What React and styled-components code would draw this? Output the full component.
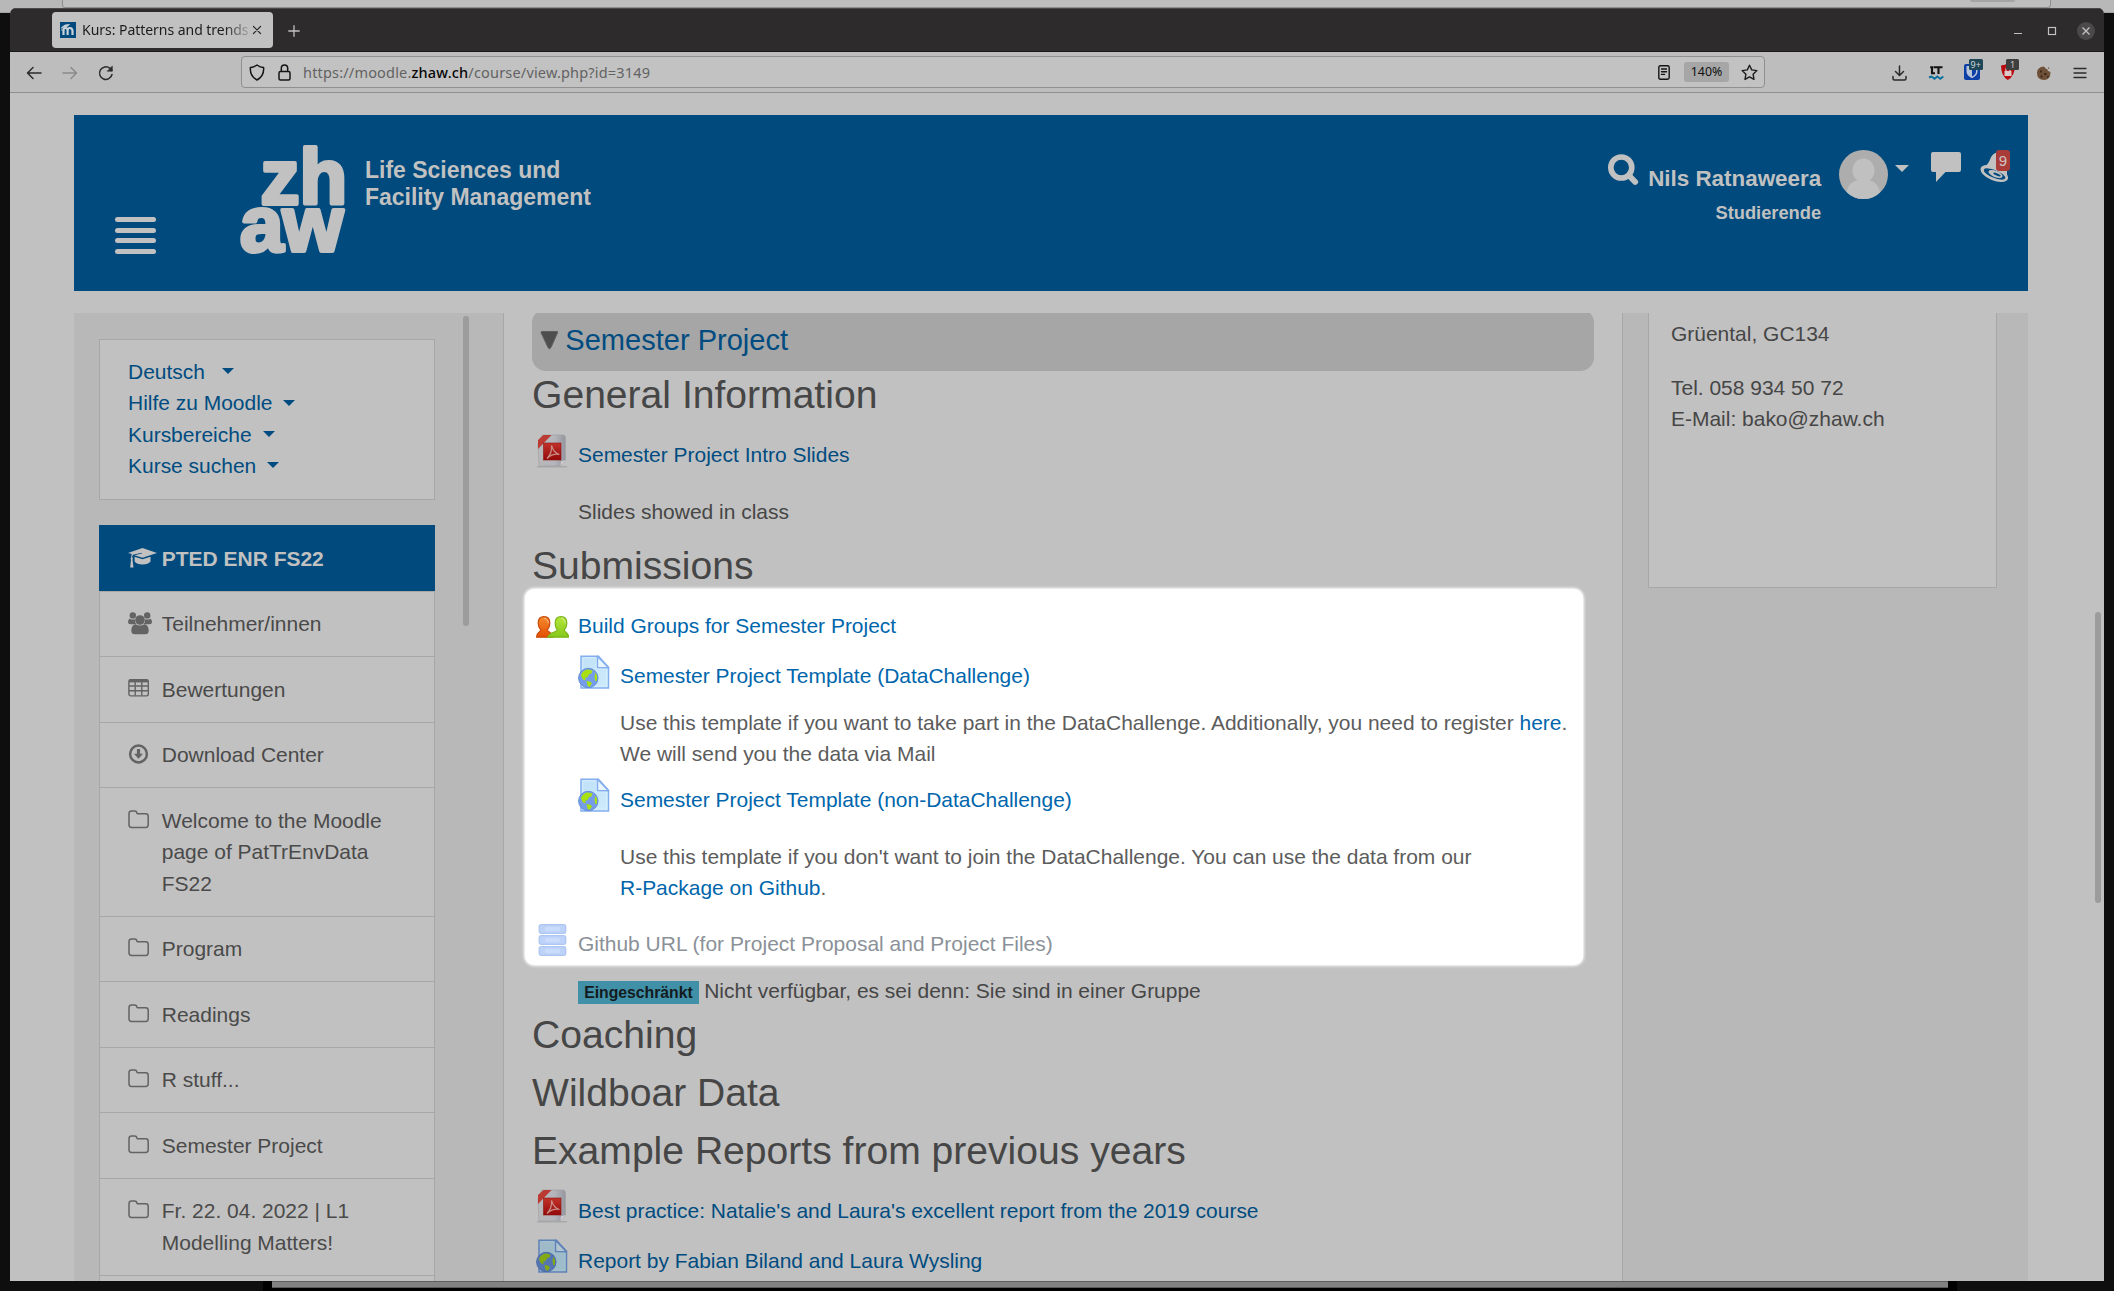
import React from "react";
import styled, { createGlobalStyle } from "styled-components";

const c = {
  page: "#c1c1c1",
  panel: "#b8b8b8",
  line: "#a7a7a7",
  brand: "#004a7d",
  link: "#004c80",
  linkLit: "#0066ac",
  text: "#464646",
  textLit: "#5c5c5c",
};
const sans = `"Liberation Sans", Arial, sans-serif`;
const ui = `"Noto Sans", "Open Sans", sans-serif`;
const body = "20.97px";

const Global = createGlobalStyle`
  * { box-sizing: border-box; }
  body { margin: 0; background: #0e0e0e; overflow: hidden; }
  p, h3 { margin: 0; font-weight: 400; }
  svg { display: block; flex: none; }
`;

/* ---------- desktop and window ---------- */
const Desktop = styled.div`
  width: 2114px;
  height: 1291px;
  overflow: hidden;
  font-family: ${sans};
  background: linear-gradient(#a4a4a4, #a4a4a4) 0 12px / 100% 1px no-repeat,
    linear-gradient(#b8b8b8, #b8b8b8) 0 0 / 100% 12px no-repeat, #0e0e0e;
`;
const BackTabStrip = styled.div`
  height: 8px;
  padding-left: 62px;
`;
const BackTab = styled.div`
  width: 1989px;
  height: 8px;
  background: #bebebe;
  border: 1px solid #8e8e8e;
  border-top: 0;
  border-radius: 0 0 3px 3px;
  padding-left: 1907px;
`;
const BackPill = styled.div`
  width: 45px;
  height: 2px;
  background: #a4a4a4;
  border-radius: 0 0 2px 2px;
`;
const Window = styled.div`
  width: 2094px;
  height: 1273px;
  margin-left: 10px;
  border-radius: 6px 6px 0 0;
  overflow: hidden;
  background: ${c.page};
`;
const BackBottom = styled.div`
  width: 1694px;
  height: 10px;
  margin-left: 263px;
  padding: 0 9px;
  background: #000;
`;
const BackBottomBar = styled.div`
  height: 7px;
  background: linear-gradient(#5e5e5e 0 1px, #828282 1px 6px, #5a5a5a 6px);
`;

/* ---------- browser chrome ---------- */
const TitleBar = styled.div`
  height: 44px;
  display: flex;
  padding: 3px 6px 0 42px;
  background: #2e2b2c;
  border-top: 1px solid #4a4848;
  border-bottom: 1px solid #1b1a1a;
`;
const Tab = styled.div`
  width: 221px;
  height: 36px;
  display: flex;
  align-items: center;
  padding: 0 10px 0 8px;
  background: #c1c1c1;
  border-radius: 4px;
`;
const TabTitle = styled.div`
  width: 168px;
  margin: 0 2px 0 6px;
  flex: none;
  overflow: hidden;
  white-space: nowrap;
  font: 14px/20px ${ui};
  letter-spacing: -0.04px;
  color: #1c1c1c;
  mask-image: linear-gradient(90deg, #000 142px, transparent 172px);
`;
const NewTab = styled.div`
  margin: 13px 0 0 15px;
`;
const Controls = styled.div`
  display: flex;
  gap: 10px;
  margin: 7px 0 0 auto;
`;
const Control = styled.div`
  width: 24px;
  height: 24px;
  display: grid;
  place-items: center;
`;
const Toolbar = styled.div`
  height: 41px;
  display: flex;
  align-items: flex-start;
  padding: 4px 6px 0;
  background: #bdbdbd;
  border-bottom: 1px solid #8f8f8f;
`;
const ToolIcon = styled.div`
  width: 36px;
  height: 34px;
  display: grid;
  place-items: center;
  flex: none;
`;
const UrlBar = styled.div`
  width: 1524px;
  height: 32px;
  margin: 0 117px 0 117px;
  display: flex;
  align-items: center;
  padding: 0 6px 0 7px;
  background: #c2c2c2;
  border: 1px solid #8f8f8f;
  border-radius: 4px;
`;
const Url = styled.div`
  flex: 1;
  margin-left: 12px;
  padding-bottom: 1px;
  font: 14.5px/20px ${ui};
  letter-spacing: 0.18px;
  color: #626262;
  b { font-weight: 500; color: #060606; }
`;
const Zoom = styled.div`
  width: 45px;
  height: 20px;
  margin: 0 12px 0 14px;
  border-radius: 3px;
  background: #a6a6a6;
  color: #111;
  font: 12.4px/20px ${ui};
  text-align: center;
`;

/* ---------- site header ---------- */
const Page = styled.div`
  height: 1188px;
  display: flex;
  padding: 22px 0 0 64px;
`;
const Site = styled.div`
  width: 1954px;
  height: 1166px;
  overflow: hidden;
`;
const ScrollThumb = styled.div`
  width: 6px;
  height: ${(p) => p.$h}px;
  margin: ${(p) => p.$top}px 0 0 ${(p) => p.$left}px;
  border-radius: 3px;
  background: #9c9c9c;
  flex: none;
`;
const Header = styled.header`
  height: 176px;
  display: flex;
  align-items: flex-start;
  padding: 0 18px 0 41px;
  background: ${c.brand};
  color: ${c.page};
`;
const Burger = styled.div`
  width: 41px;
  margin-top: 102px;
  display: grid;
  gap: 5.3px;
  i { height: 5.3px; border-radius: 3px; background: ${c.page}; }
`;
const Logo = styled.svg`
  margin: 25px 0 0 80px;
  overflow: visible;
  text { font: 700 78px ${sans}; fill: ${c.page}; stroke: ${c.page}; stroke-width: 4px; stroke-linejoin: round; }
`;
const Tagline = styled.div`
  margin: 42.4px auto 0 17px;
  font-size: 23px;
  line-height: 26.5px;
  font-weight: 700;
  letter-spacing: -0.02px;
  white-space: nowrap;
`;
const UserBlock = styled.div`
  margin: 49.5px 18.2px 0 8.7px;
  text-align: right;
  font-weight: 700;
  line-height: 28px;
  white-space: nowrap;
`;
const UserName = styled.div`
  font-size: 22.4px;
`;
const UserRole = styled.div`
  margin-top: 6px;
  font-size: 18.3px;
`;
const Avatar = styled.div`
  width: 49px;
  height: 49px;
  margin-top: 35px;
  border-radius: 50%;
  overflow: hidden;
  background: #adadad;
`;
const Caret = styled.span`
  display: inline-block;
  border: ${(p) => p.$s}px solid transparent;
  border-top-color: currentColor;
  border-bottom: 0;
  margin: ${(p) => p.$m};
`;
const At = styled.div`
  margin: ${(p) => p.$m};
`;
const Bell = styled.div`
  width: 30px;
  height: 33px;
  margin: 35px 0 0 19px;
  position: relative;
`;
const BellCount = styled.span`
  position: absolute;
  left: 16px;
  top: 0;
  width: 14px;
  height: 21px;
  border-radius: 3px;
  background: #a93b39;
  color: #d0c4c4;
  font: 15px/22px ${sans};
  text-align: center;
`;

/* ---------- columns ---------- */
const Columns = styled.div`
  height: 968px;
  margin-top: 22px;
  display: grid;
  grid-template-columns: 430px 1118px 406px;
`;
const Sidebar = styled.aside`
  height: 968px;
  overflow: hidden;
  display: flex;
  padding-left: 25px;
  background: ${c.panel};
  border-right: 1px solid ${c.line};
`;
const SideInner = styled.div`
  width: 336px;
  padding-top: 26px;
  flex: none;
`;
const MenuCard = styled.nav`
  height: 161px;
  padding: 15.9px 0 0 28px;
  background: ${c.page};
  border: 1px solid ${c.line};
  color: ${c.link};
  font-size: ${body};
  line-height: 31.4px;
`;
const MenuLink = styled.div`
  display: flex;
  align-items: flex-start;
  height: 31.4px;
`;
const NavList = styled.nav`
  margin-top: 25px;
  height: 800px;
  background: ${c.page};
  border: solid ${c.line};
  border-width: 0 1px;
`;
const NavItem = styled.div`
  display: flex;
  align-items: flex-start;
  padding: 16.5px 22px 16.5px ${(p) => (p.$active ? 29.3 : 28.3)}px;
  margin: ${(p) => (p.$active ? "0 -1px" : "0")};
  border-top: 1px solid ${(p) => (p.$active ? c.brand : c.line)};
  background: ${(p) => (p.$active ? c.brand : "transparent")};
  color: ${(p) => (p.$active ? c.page : "#4a4a4a")};
  font-weight: ${(p) => (p.$active ? 700 : 400)};
  font-size: ${body};
  line-height: 31.5px;
`;
const NavIcon = styled.span`
  width: 33.5px;
  flex: none;
  padding-top: 4px;
  color: ${(p) => (p.$active ? c.page : "#636363")};
  svg { overflow: visible; }
`;
const Main = styled.main`
  height: 968px;
  overflow: hidden;
  padding: 0 28px;
  color: ${c.text};
`;
const SectionBar = styled.div`
  height: 62px;
  margin-top: -4px;
  display: flex;
  align-items: center;
  padding: 0 0 0 8px;
  border-radius: 14px;
  background: #a6a6a6;
  color: ${c.link};
  font-size: 29.05px;
`;
const SectionTitle = styled.div`
  margin-left: 6.3px;
  line-height: 34px;
`;
const Heading = styled.h3`
  margin-top: ${(p) => p.$gap}px;
  font-size: 39.1px;
  line-height: 46px;
  height: 44px;
  white-space: nowrap;
`;
const Item = styled.div`
  display: flex;
  align-items: flex-start;
  height: 31px;
  margin-top: ${(p) => p.$gap}px;
  padding-left: ${(p) => (p.$nested ? 46 : 4)}px;
  font-size: ${body};
  line-height: 31px;
  white-space: nowrap;
  color: ${(p) => (p.$tone === "lit" ? c.linkLit : p.$tone === "muted" ? "#8b9198" : c.link)};
`;
const IconSlot = styled.span`
  width: 42px;
  height: 34px;
  margin-top: ${(p) => p.$shift}px;
  flex: none;
`;
const Desc = styled.p`
  margin-top: ${(p) => p.$gap}px;
  padding-left: ${(p) => (p.$nested ? 88 : 46)}px;
  font-size: ${body};
  line-height: 31px;
  white-space: nowrap;
  color: ${(p) => (p.$nested ? c.textLit : c.text)};
  a { color: ${c.linkLit}; }
`;
const Spotlight = styled.section`
  width: 1058px;
  height: 376px;
  margin: 2px 0 0 -7px;
  padding: 1px 0 0 7px;
  border-radius: 9px;
  background: #fff;
  box-shadow: 0 0 3px 1px #fff;
`;
const Restriction = styled.div`
  display: flex;
  height: 31px;
  margin-top: 10px;
  padding-left: 46px;
  font-size: ${body};
  line-height: 31px;
  white-space: nowrap;
`;
const Badge = styled.span`
  height: 23px;
  margin: 6px 5.3px 0 0;
  padding: 0 6.2px;
  background: #4090a8;
  color: #131b1e;
  font-size: 15.75px;
  line-height: 23px;
  font-weight: 700;
`;
const RightCol = styled.aside`
  padding-left: 25px;
  background: ${c.panel};
  border-left: 1px solid ${c.line};
`;
const ContactCard = styled.div`
  width: 349px;
  height: 275px;
  padding: 5px 0 0 22px;
  background: ${c.page};
  border: 1px solid ${c.line};
  border-top: 0;
  color: ${c.text};
  font-size: ${body};
  line-height: 31px;
  p + p { margin-top: 23px; }
`;

/* ---------- drawings ---------- */
const Svg = ({ w, h, children, ...p }) => (
  <svg width={w} height={h} viewBox={`0 0 ${w} ${h}`} fill="none" {...p}>{children}</svg>
);
const Line = (p) => <path fill="none" stroke="#2b2b2b" strokeWidth="1.5" strokeLinecap="round" strokeLinejoin="round" {...p} />;

const PdfIcon = () => (
  <Svg w={33} h={34}>
    <defs>
      <linearGradient id="pdfPaper" x1="0" x2="1"><stop stopColor="#b9b9bb" /><stop offset=".6" stopColor="#b4b4bb" /><stop offset="1" stopColor="#96969f" /></linearGradient>
      <linearGradient id="pdfRed" x1="0" y1="0" x2="0" y2="1"><stop stopColor="#c23229" /><stop offset="1" stopColor="#93090a" /></linearGradient>
    </defs>
    <path d="M1 32h30v1.500H1z" fill="#999" opacity=".6" />
    <path d="M6 1h22l1.500 2v23l-5 6H3L2 10z" fill="url(#pdfPaper)" stroke="#a2a2a6" strokeWidth=".7" />
    <path d="M29.500 26l-5 6 .5-4.500z" fill="#d0d0d4" />
    <path d="M7.500 1h8L2 15V6z" fill="#bb3a32" />
    <rect x="7.500" y="9" width="17.500" height="17" fill="url(#pdfRed)" stroke="#8d1513" strokeWidth=".6" />
    <path d="M15.500 11.500c1.500 5 3.500 8 8 9-4-1-8 0-12.500 4 3-3 5-8 4.500-13z" stroke="#c98f88" strokeWidth="1.200" />
  </Svg>
);
const WebIcon = ({ dim }) => {
  const id = dim ? "webDim" : "webLit";
  return (
    <Svg w={33} h={34}>
      <defs>
        <linearGradient id={id} x1="0" y1="0" x2="1" y2="1"><stop stopColor={dim ? "#9fb8c7" : "#bfe0f8"} /><stop offset="1" stopColor={dim ? "#9dbdcb" : "#cdebfb"} /></linearGradient>
      </defs>
      <path d="M3 1.200h17.500l10 11V33H3z" fill={`url(#${id})`} stroke={dim ? "#5f82b8" : "#84aef0"} strokeWidth="1.500" />
      <path d="M4.800 2.900h13.500v11h10.500v17.300h-24z" stroke={dim ? "#a9c3d0" : "#ddf1fd"} strokeWidth=".8" />
      <path d="M19.500 1.200V12.500l11 .3z" fill={dim ? "#b3c5cf" : "#e9f6fe"} stroke={dim ? "#5f82b8" : "#84aef0"} strokeWidth="1.500" strokeLinejoin="round" />
      <circle cx="10.300" cy="23" r="9.700" fill={dim ? "#5575b2" : "#759de8"} stroke={dim ? "#4a69a8" : "#638bd8"} strokeWidth="1" />
      <path d="M3 20.500c.8-3.500 4-6 7-6l4.500 1-1 3-2.500.7-1.500 3-2.500.5 1 2.500-3-.7zM8.500 26l4 .7 1.500 1.800-2.500 3.500-2-1.500zM17.500 17.500l1.500 3v5l-1.700.8-.8-4.500z" fill={dim ? "#83aa12" : "#a9e010"} />
    </Svg>
  );
};
const GroupIcon = () => (
  <Svg w={33} h={34}>
    <defs>
      <linearGradient id="gOrange" x1="0" y1="0" x2="0" y2="1"><stop stopColor="#f58a2c" /><stop offset="1" stopColor="#e44f04" /></linearGradient>
      <linearGradient id="gGreen" x1="0" y1="0" x2="0" y2="1"><stop stopColor="#b6e63a" /><stop offset="1" stopColor="#86c81c" /></linearGradient>
    </defs>
    <path d="M8 .7c4 0 5.800 2.800 5.800 6.500 0 3-1 5.200-2.600 6.800.2 2 5.300 2 5.300 7.200H.6c0-5 4-5.200 4.300-7.200C3.300 12.300 2.200 10 2.200 7.200 2.200 3.500 4 .7 8 .7z" fill="url(#gOrange)" stroke="#c94a08" strokeWidth="1.200" />
    <path d="M25 .7c4 0 5.800 2.800 5.800 6.500 0 3-1 5.200-2.600 6.800.2 2 4.300 2.200 4.300 7.200H11.800c1-5 9.500-5.200 9.500-7.200-1.600-1.700-2.100-4-2.100-6.800C19.200 3.500 21 .7 25 .7z" fill="url(#gGreen)" stroke="#7ab51a" strokeWidth="1.200" />
    <path d="M25 2.300c3 0 4.200 2.200 4.200 5M8 2.300c3 0 4.200 2.200 4.200 5" stroke="#fff" opacity=".45" />
  </Svg>
);
const DbIcon = () => (
  <Svg w={33} h={34}>
    {[0.7, 11.7, 22.7].map((y) => (
      <g key={y}>
        <rect x="3.200" y={y} width="26.500" height="8.600" rx="2" fill="#bcd2f8" stroke="#aec6f2" strokeWidth="1.300" />
        <rect x="9" y={y + 2} width="15" height="4.600" rx="2" fill="#c9dcfb" />
      </g>
    ))}
  </Svg>
);
const FolderIcon = () => (
  <Svg w={21} h={23}>
    <path d="M1 4.500Q1 1.900 3.500 1.900h3.200Q8.800 1.900 8.900 4.200q.1.600 1 .6h7.800Q20.200 4.800 20.200 7.400v8.400q0 2.600-2.500 2.600H3.500Q1 18.400 1 15.800z" stroke="currentColor" strokeWidth="1.500" />
  </Svg>
);
const CapIcon = () => (
  <Svg w={29} h={22}>
    <path fill="currentColor" d="M14.500 1L29 6 14.500 10.700 6.500 8.200 13.800 6.600v-.8L5 7.700q-.8.700-.8 2.800 1.300 1 .3 2.200L5.500 20.600H2.200L3 12.700q-1-1.200.2-2.200 0-2 .6-3.400L0 6z" />
    <path fill="currentColor" d="M6.600 9.800l7.900 2.500 8-2.500v4.800q-2.200 3-8 3t-7.900-3z" />
  </Svg>
);
const PeopleIcon = () => (
  <Svg w={24} h={23}>
    <g fill="currentColor">
      <circle cx="4.800" cy="3.400" r="3.200" /><circle cx="19.200" cy="3.400" r="3.200" />
      <path d="M1.500 6.700q3.200 1.400 5.500.5-.5 3 1.300 5H2.500Q0 12.200 0 10q0-2.400 1.500-3.300zM22.500 6.700q-3.200 1.400-5.500.5.500 3-1.300 5h5.800Q24 12.200 24 10q0-2.400-1.500-3.300z" />
      <circle cx="12" cy="8" r="4.800" />
      <path d="M7.500 12.200q4.500 2.800 9 0 4.200.8 4.200 6.500 0 3.600-3.600 3.600H6.900q-3.600 0-3.600-3.600 0-5.700 4.200-6.500z" />
    </g>
  </Svg>
);
const TableIcon = () => (
  <Svg w={21} h={20}>
    <rect x=".9" y="1.700" width="19.400" height="16.200" rx="1.800" stroke="currentColor" strokeWidth="1.400" />
    <path d="M1 8h19M1 12.700h19M7.200 3v14.500M13.800 3v14.500" stroke="currentColor" strokeWidth="1.400" />
    <path d="M1 3h19" stroke="currentColor" strokeWidth="2.800" />
  </Svg>
);
const DownIcon = () => (
  <Svg w={21} h={22}>
    <circle cx="10.500" cy="11" r="8.400" stroke="currentColor" strokeWidth="2.500" />
    <path d="M8.900 6h3.200v4.800H15L10.500 15.700 6 10.800h2.900z" fill="currentColor" />
  </Svg>
);

const navItems = [
  [PeopleIcon, "Teilnehmer/innen"],
  [TableIcon, "Bewertungen"],
  [DownIcon, "Download Center"],
  [FolderIcon, "Welcome to the Moodle page of PatTrEnvData FS22"],
  [FolderIcon, "Program"],
  [FolderIcon, "Readings"],
  [FolderIcon, "R stuff..."],
  [FolderIcon, "Semester Project"],
  [FolderIcon, "Fr. 22. 04. 2022 | L1 Modelling Matters!"],
];
const menu = [
  ["Deutsch", "12.4px 0 0 17px"],
  ["Hilfe zu Moodle", "12.4px 0 0 10.5px"],
  ["Kursbereiche", "12.4px 0 0 11px"],
  ["Kurse suchen", "12.4px 0 0 11px"],
];

function Chrome() {
  return (
    <>
      <TitleBar>
        <Tab>
          <Svg w={16} h={16}>
            <rect width="16" height="16" fill="#004a7d" />
            <path d="M3.500 13V8.500Q3.500 6 5.500 6T7.600 8.500V13M7.600 8.500Q7.600 6 9.800 6T12.500 8.500V13" stroke="#c8d2da" strokeWidth="2.200" />
            <path d="M1.500 5.500L5 3l4.500-.5L6.500 5zM2 5.500V9" stroke="#c8d2da" fill="#c8d2da" strokeWidth=".8" />
          </Svg>
          <TabTitle>Kurs: Patterns and trends</TabTitle>
          <Svg w={10} h={10}><Line d="M1.500 1.500l7 7M8.500 1.500l-7 7" strokeWidth="1.200" /></Svg>
        </Tab>
        <NewTab><Svg w={12} h={12}><path d="M6 .3v11.400M.3 6h11.400" stroke="#c1c1c1" strokeWidth="1.300" /></Svg></NewTab>
        <Controls>
          <Control><Svg w={12} h={10}><path d="M2 7.500h8" stroke="#c1c1c1" strokeWidth="1.200" /></Svg></Control>
          <Control><Svg w={10} h={10}><rect x="1.500" y="1.500" width="7" height="7" stroke="#c1c1c1" strokeWidth="1.200" /></Svg></Control>
          <Control>
            <Svg w={18} h={18}><circle cx="9" cy="9" r="9" fill="#4b4949" /><path d="M5.500 5.500l7 7M12.500 5.500l-7 7" stroke="#c1c1c1" strokeWidth="1.400" /></Svg>
          </Control>
        </Controls>
      </TitleBar>
      <Toolbar>
        <ToolIcon><Svg w={16} h={14}><Line d="M15 7H1.500M7 1.500L1.500 7 7 12.500" /></Svg></ToolIcon>
        <ToolIcon><Svg w={16} h={14}><Line stroke="#8a8a8a" d="M1 7h13.500M9 1.500L14.500 7 9 12.500" /></Svg></ToolIcon>
        <ToolIcon><Svg w={16} h={16}><Line d="M14 9.500A6.300 6.300 0 1 1 11.800 3.200L14 5" /><Line d="M14.300 1.300v4.900H9.500z" fill="#2b2b2b" strokeWidth=".6" /></Svg></ToolIcon>
        <UrlBar>
          <Svg w={16} h={17}><Line stroke="#151515" d="M8 1q3 2.300 6.600 2.500Q15.300 12 8 16 .7 12 1.400 3.500 5 3.300 8 1z" /></Svg>
          <At $m="0 0 0 13px"><Svg w={13} h={17}><Line stroke="#151515" d="M2.500 7.500h8q1.500 0 1.500 1.500v5.500q0 1.500-1.500 1.500h-8Q1 16 1 14.500V9q0-1.500 1.500-1.500zM3.300 7.500V4.300Q3.300 1 6.500 1t3.200 3.300v3.200" /></Svg></At>
          <Url>https://moodle.<b>zhaw.ch</b>/course/view.php?id=3149</Url>
          <Svg w={12} h={15}><Line stroke="#151515" d="M2.500.8h7q1.700 0 1.700 1.700v10q0 1.700-1.700 1.700h-7Q.8 14.200.8 12.500v-10Q.8.8 2.500.8zM3.500 4h5M3.500 6.700h5M3.500 9.400h3" strokeWidth="1.400" /></Svg>
          <Zoom>140%</Zoom>
          <Svg w={17} h={17}><Line stroke="#1c1c1c" strokeWidth="1.400" d="M8.500 1.200l2.200 4.700 5.200.7-3.800 3.600.9 5.200-4.500-2.500L4 15.400l.9-5.200L1.100 6.600l5.200-.7z" /></Svg>
        </UrlBar>
        <ToolIcon><Svg w={16} h={16}><Line d="M7.500 1v9.300M3.500 6.500l4 4 4-4M1 11.500v2q0 1.500 1.500 1.500h10q1.500 0 1.500-1.500v-2" /></Svg></ToolIcon>
        <ToolIcon>
          <Svg w={17} h={16}>
            <path d="M2.200 2.200H4V8.200H7M5.500 2.200H14.500M10.500 2.200V9" stroke="#111" strokeWidth="2.100" />
            <path d="M1 12.500l2.500-1 3 2.300 2.800-2.300 3 2.300 3-2.300" stroke="#0a6f9c" strokeWidth="1.900" />
          </Svg>
        </ToolIcon>
        <ToolIcon>
          <Svg w={22} h={32}>
            <rect x="3" y="7" width="16" height="16" rx="2" fill="#0c40a6" />
            <path d="M5.500 9h11v5.500q0 4-5.500 6.700-5.500-2.700-5.500-6.700z" fill="#b8c4d8" /><path d="M11 10.500h4v4q0 3-4 5z" fill="#0c40a6" />
            <rect x="8" y="2" width="14" height="11" rx="1.500" fill="#1f4657" />
            <text x="9.500" y="10.700" fontSize="9" fontFamily="Noto Sans" fill="#ccd6da">9+</text>
          </Svg>
        </ToolIcon>
        <ToolIcon>
          <Svg w={22} h={32}>
            <path d="M4 8.500Q8 8 10.800 6.500 14 8 18 8.500 18 19 10.800 23 4 19 4 8.500z" fill="#b80a0f" />
            <rect x="7.500" y="14" width="7" height="5" fill="#ddc6c6" /><path d="M9 14v-2q0-1.500 2-1.500t2 1.500v2" stroke="#ddc6c6" strokeWidth="1.300" />
            <rect x="9" y="2" width="13" height="11" rx="1.500" fill="#3e3e3e" />
            <text x="13" y="10.700" fontSize="9" fontFamily="Noto Sans" fill="#cfcfcf">1</text>
          </Svg>
        </ToolIcon>
        <ToolIcon>
          <Svg w={16} h={16}>
            <path d="M8 1.500q1.500 2.500 3 2.500.5 2.500 3.500 3Q14.500 15 8 15 1 15 1 8q0-6 7-6.500z" fill="#6e5138" />
            <path d="M4 5.500h2v2H4zM8 8h2.500v2H8zM4.500 10.500h2v2h-2zM11 11h1.500v1.500H11z" fill="#3a2a1c" /><path d="M12 2.500h1.200v1.200H12z" fill="#6e5138" />
          </Svg>
        </ToolIcon>
        <ToolIcon><Svg w={14} h={12}><Line strokeWidth="1.300" d="M1 1.500h12M1 6h12M1 10.500h12" /></Svg></ToolIcon>
      </Toolbar>
    </>
  );
}

function SiteHeader() {
  return (
    <Header>
      <Burger><i /><i /><i /><i /></Burger>
      <Logo width="112" height="120" viewBox="236 140 112 120">
        <text x="260.500 299.500" y="203.500">zh</text>
        <text x="240 282.500" y="251">aw</text>
      </Logo>
      <Tagline>Life Sciences und<br />Facility Management</Tagline>
      <At $m="39px 0 0 0">
        <Svg w={31} h={32}>
          <circle cx="13.300" cy="13.500" r="10.500" stroke={c.page} strokeWidth="5.600" />
          <path d="M21 21.500l6.200 6.500" stroke={c.page} strokeWidth="5.800" strokeLinecap="round" />
        </Svg>
      </At>
      <UserBlock>
        <UserName>Nils Ratnaweera</UserName>
        <UserRole>Studierende</UserRole>
      </UserBlock>
      <Avatar>
        <Svg w={49} h={49}>
          <ellipse cx="24.500" cy="20.500" rx="11" ry="12" fill="#c0c0c0" />
          <path d="M7 49q0-17 12-18.500h11Q41 32 42 49z" fill="#c0c0c0" />
        </Svg>
      </Avatar>
      <Caret $s={7.8} $m="50px 21.9px 0 6.8px" />
      <At $m="37px 0 0 0">
        <Svg w={30} h={31}><path d="M2 0h26q2 0 2 2v16q0 2-2 2H14.500L5 30V20H2q-2 0-2-2V2q0-2 2-2z" fill={c.page} /></Svg>
      </At>
      <Bell>
        <Svg w={30} h={33}>
          <path d="M17 2.500q-5 1-7 7T2 17.500L27 25V3z" fill={c.page} />
          <ellipse cx="14.300" cy="23.500" rx="14.600" ry="7" transform="rotate(22 14.300 23.500)" fill={c.page} />
          <ellipse cx="14.500" cy="24" rx="11.500" ry="3.900" transform="rotate(22 14.500 24)" fill={c.brand} />
          <ellipse cx="15.500" cy="24" rx="7.500" ry="3.200" transform="rotate(22 15.500 24)" fill={c.page} />
          <ellipse cx="17" cy="24.500" rx="4" ry="1.100" transform="rotate(22 17 24.500)" fill={c.brand} />
        </Svg>
        <BellCount>9</BellCount>
      </Bell>
    </Header>
  );
}

const Activity = ({ icon, shift = -6, children, ...p }) => (
  <Item {...p}>
    <IconSlot $shift={shift}>{icon}</IconSlot>
    <span>{children}</span>
  </Item>
);

export default function App() {
  return (
    <Desktop>
      <Global />
      <BackTabStrip><BackTab><BackPill /></BackTab></BackTabStrip>
      <Window>
        <Chrome />
        <Page>
          <Site>
            <SiteHeader />
            <Columns>
              <Sidebar>
                <SideInner>
                  <MenuCard>
                    {menu.map(([label, m]) => (
                      <MenuLink key={label}>{label}<Caret $s={6} $m={m} /></MenuLink>
                    ))}
                  </MenuCard>
                  <NavList>
                    <NavItem $active><NavIcon $active><CapIcon /></NavIcon>PTED ENR FS22</NavItem>
                    {navItems.map(([Icon, label]) => (
                      <NavItem key={label}><NavIcon><Icon /></NavIcon><span>{label}</span></NavItem>
                    ))}
                    <NavItem />
                  </NavList>
                </SideInner>
                <ScrollThumb $h={310} $top={3} $left={28} />
              </Sidebar>
              <Main>
                <SectionBar>
                  <Svg w={19} h={20}><path d="M1.500 1.500h15.500q1 0 .6 1L11 17.500q-1.500 2.500-3 0L1 2.500z" fill="#4e4e4e" stroke="#5e5e5e" /></Svg>
                  <SectionTitle>Semester Project</SectionTitle>
                </SectionBar>
                <Heading $gap={1}>General Information</Heading>
                <Activity $gap={23} shift={-5} icon={<PdfIcon />}>Semester Project Intro Slides</Activity>
                <Desc $gap={26}>Slides showed in class</Desc>
                <Heading $gap={16}>Submissions</Heading>
                <Spotlight>
                  <Activity $gap={20} shift={6} $tone="lit" icon={<GroupIcon />}>Build Groups for Semester Project</Activity>
                  <Activity $gap={19} shift={-5} $nested $tone="lit" icon={<WebIcon />}>Semester Project Template (DataChallenge)</Activity>
                  <Desc $gap={16} $nested>
                    Use this template if you want to take part in the DataChallenge. Additionally, you need to register <a>here</a>.<br />
                    We will send you the data via Mail
                  </Desc>
                  <Activity $gap={15} $nested $tone="lit" icon={<WebIcon />}>Semester Project Template (non-DataChallenge)</Activity>
                  <Desc $gap={26} $nested>
                    Use this template if you don't want to join the DataChallenge. You can use the data from our<br />
                    <a>R-Package on Github</a>.
                  </Desc>
                  <Activity $gap={25} shift={-4} $tone="muted" icon={<DbIcon />}>Github URL (for Project Proposal and Project Files)</Activity>
                </Spotlight>
                <Restriction><Badge>Eingeschränkt</Badge>Nicht verfügbar, es sei denn: Sie sind in einer Gruppe</Restriction>
                <Heading $gap={6}>Coaching</Heading>
                <Heading $gap={14}>Wildboar Data</Heading>
                <Heading $gap={14}>Example Reports from previous years</Heading>
                <Activity $gap={23} icon={<PdfIcon />}>Best practice: Natalie's and Laura's excellent report from the 2019 course</Activity>
                <Activity $gap={19} icon={<WebIcon dim />}>Report by Fabian Biland and Laura Wysling</Activity>
              </Main>
              <RightCol>
                <ContactCard>
                  <p>Grüental, GC134</p>
                  <p>Tel. 058 934 50 72<br />E-Mail: bako@zhaw.ch</p>
                </ContactCard>
              </RightCol>
            </Columns>
          </Site>
          <ScrollThumb $h={291} $top={497} $left={67} />
        </Page>
      </Window>
      <BackBottom><BackBottomBar /></BackBottom>
    </Desktop>
  );
}
